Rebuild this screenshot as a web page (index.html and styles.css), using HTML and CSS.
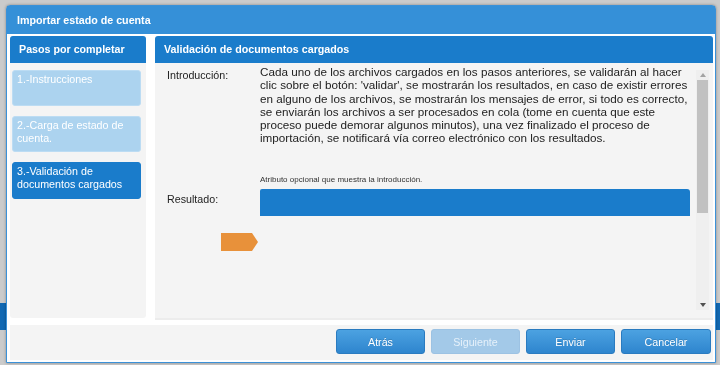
FILE: index.html
```html
<!DOCTYPE html>
<html>
  <head>
    <title>Importar estado de cuenta</title>
    <link rel="stylesheet" href="styles.css">
  </head>
  <body>
    <div class="dialog">
      <div class="dialog-title">Importar estado de cuenta</div>

      <div class="dialog-body">
        <div class="steps">
          <div class="panel-head">Pasos por completar</div>
          <div class="steps-list">
            <div class="step">1.-Instrucciones</div>
            <div class="step">2.-Carga de estado de cuenta.</div>
            <div class="step active">3.-Validación de documentos cargados</div>
          </div>
        </div>

        <div class="main">
          <div class="panel-head">Validación de documentos cargados</div>
          <div class="main-body">
            <div class="fields">
              <div class="field">
                <div class="label intro-label">Introducción:</div>
                <div class="value">
                  <p class="intro">Cada uno de los archivos cargados en los pasos anteriores, se validarán al hacer
                  clic sobre el botón: 'validar', se mostrarán los resultados, en caso de existir errores
                  en alguno de los archivos, se mostrarán los mensajes de error, si todo es correcto,
                  se enviarán los archivos a ser procesados en cola (tome en cuenta que este
                  proceso puede demorar algunos minutos), una vez finalizado el proceso de
                  importación, se notificará vía correo electrónico con los resultados.</p>
                  <p class="hint">Atributo opcional que muestra la introducción.</p>
                </div>
              </div>

              <div class="field result">
                <div class="label">Resultado:</div>
                <div class="value">
                  <div class="result-bar"></div>
                </div>
              </div>

              <svg class="marker" width="38" height="18" viewBox="0 0 38 18">
                <polygon points="0,0 31,0 37,9 31,18 0,18" fill="#e8913a"/>
              </svg>
            </div>

            <div class="scrollbar">
              <div class="arrow up"></div>
              <div class="thumb"></div>
              <div class="track"></div>
              <div class="arrow down"></div>
            </div>
          </div>
        </div>
      </div>

      <div class="dialog-foot">
        <button class="btn">Atrás</button>
        <button class="btn" disabled>Siguiente</button>
        <button class="btn">Enviar</button>
        <button class="btn wide">Cancelar</button>
      </div>
    </div>
  </body>
</html>
```

FILE: styles.css
```css
body {
  margin: 0;
  padding: 5px 4px 0 6px;
  height: 365px;
  box-sizing: border-box;
  overflow: hidden;
  background: #cbcbcb;
  font-family: 'Liberation Sans', Arial, sans-serif;
  color: #222;
}

/* page band behind the modal */
body::before {
  content: '';
  position: fixed;
  left: 0;
  right: 0;
  top: 303px;
  height: 27px;
  background: #1269b3;
}

.dialog {
  position: relative;
  width: 708px;
  height: 356px;
  background: #fff;
  border: 1px solid #3b91d8;
  border-radius: 4px 4px 0 0;
  box-shadow: 0 0 3px rgba(0, 0, 0, 0.35);
}

.dialog-title {
  height: 28px;
  line-height: 28px;
  padding-left: 10px;
  background: #3590d8;
  color: #fff;
  font-weight: bold;
  font-size: 10.7px;
}

.dialog-body {
  display: flex;
  gap: 9px;
  height: 282px;
  padding: 2px 2px 0 3px;
}

.panel-head {
  height: 27px;
  line-height: 27px;
  padding-left: 9px;
  background: #1a7ccb;
  color: #fff;
  font-weight: bold;
  font-size: 10.7px;
  border-radius: 3px 3px 0 0;
}

.steps {
  width: 136px;
  background: #f4f4f4;
  border-radius: 3px;
}

.steps-list {
  display: flex;
  flex-direction: column;
  gap: 10px;
  padding: 7px 5px 0 2px;
}

.step {
  height: 36px;
  box-sizing: border-box;
  padding: 2px 4px;
  background: #acd3ef;
  border: 1px solid #bcdcf3;
  border-radius: 3px;
  color: #fff;
  font-size: 10.7px;
  line-height: 12.5px;
}

.step.active {
  height: 37px;
  background: #1a7ccb;
  border-color: #1a7ccb;
}

.main {
  flex: 1;
  display: flex;
  flex-direction: column;
  box-shadow: 0 2px 0 #ececec;
}

.main-body {
  flex: 1;
  display: flex;
  justify-content: space-between;
  padding: 2px 4px 0 12px;
  background: #f4f4f4;
}

.fields {
  display: flex;
  flex-direction: column;
}

.field {
  display: flex;
}

.label {
  width: 93px;
  font-size: 10.7px;
  line-height: 13px;
}

.intro-label {
  padding-top: 4px;
}

.value {
  width: 432px;
}

.intro {
  margin: 0;
  font-size: 11.7px;
  line-height: 13.3px;
}

.hint {
  margin: 30px 0 0 0;
  font-size: 8px;
  line-height: 10px;
  color: #333;
}

.result {
  margin-top: 4px;
}

.result .label {
  padding-top: 4px;
}

.result-bar {
  width: 430px;
  height: 27px;
  background: #1a7ccb;
  border-radius: 2px 3px 0 0;
}

.marker {
  display: block;
  margin: 17px 0 0 54px;
}

.scrollbar {
  display: flex;
  flex-direction: column;
  width: 13px;
  margin: 5px 0 8px 0;
  background: #efefef;
}

.arrow {
  height: 10px;
  display: flex;
  justify-content: center;
  align-items: center;
}

.arrow::after {
  content: '';
  border-left: 3.5px solid transparent;
  border-right: 3.5px solid transparent;
}

.arrow.up::after {
  border-bottom: 4px solid #a3a3a3;
}

.arrow.down::after {
  border-top: 4px solid #505050;
}

.thumb {
  height: 133px;
  margin: 0 1px;
  background: #c1c1c1;
}

.track {
  flex: 1;
}

.dialog-foot {
  display: flex;
  justify-content: flex-end;
  gap: 6px;
  height: 35px;
  box-sizing: border-box;
  margin: 7px 2px 0 3px;
  padding: 4px 2px 0 0;
  background: #f4f4f4;
}

.btn {
  width: 89px;
  height: 25px;
  padding: 0;
  background: linear-gradient(#4ca2e1, #2e85ce);
  border: 1px solid #2a7bc0;
  border-radius: 3px;
  color: #fff;
  font-family: 'Liberation Sans', Arial, sans-serif;
  font-size: 10.7px;
  text-shadow: 0 -1px 0 rgba(0, 0, 0, 0.15);
  cursor: pointer;
}

.btn.wide {
  width: 90px;
}

.btn:disabled {
  background: #a3c9e8;
  border-color: #9cc2e3;
  color: #e6f1fa;
  text-shadow: none;
  cursor: default;
}
```
